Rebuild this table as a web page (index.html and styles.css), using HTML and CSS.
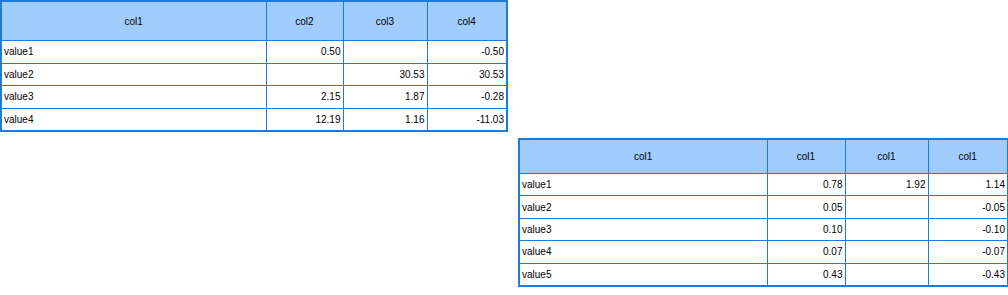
FILE: index.html
```html
<!DOCTYPE html>
<html>
<head>
<meta charset="utf-8">
<link rel="stylesheet" href="styles.css">
</head>
<body>
<div class="page">
  <table class="grid grid-a">
    <colgroup><col class="c1a"><col class="c2a"><col class="c3a"><col class="c4a"></colgroup>
    <thead>
      <tr><th>col1</th><th>col2</th><th>col3</th><th>col4</th></tr>
    </thead>
    <tbody>
      <tr><td class="lbl">value1</td><td>0.50</td><td></td><td>-0.50</td></tr>
      <tr><td class="lbl">value2</td><td></td><td>30.53</td><td>30.53</td></tr>
      <tr><td class="lbl">value3</td><td>2.15</td><td>1.87</td><td>-0.28</td></tr>
      <tr><td class="lbl">value4</td><td>12.19</td><td>1.16</td><td>-11.03</td></tr>
    </tbody>
  </table>
  <div class="second">
    <table class="grid grid-b">
      <colgroup><col class="c1b"><col class="c2b"><col class="c3b"><col class="c4b"></colgroup>
      <thead>
        <tr><th>col1</th><th>col1</th><th>col1</th><th>col1</th></tr>
      </thead>
      <tbody>
        <tr><td class="lbl">value1</td><td>0.78</td><td>1.92</td><td>1.14</td></tr>
        <tr><td class="lbl">value2</td><td>0.05</td><td></td><td>-0.05</td></tr>
        <tr><td class="lbl">value3</td><td>0.10</td><td></td><td>-0.10</td></tr>
        <tr><td class="lbl">value4</td><td>0.07</td><td></td><td>-0.07</td></tr>
        <tr><td class="lbl">value5</td><td>0.43</td><td></td><td>-0.43</td></tr>
      </tbody>
    </table>
  </div>
</div>
</body>
</html>
```

FILE: styles.css
```css
html, body {
  margin: 0;
  padding: 0;
  background: #ffffff;
}

.page {
  display: flex;
  flex-direction: column;
  align-items: flex-start;
}

.grid {
  border-collapse: collapse;
  table-layout: fixed;
  font-family: "Liberation Sans", Arial, sans-serif;
  font-size: 10px;
  color: #000000;
  border: 2px solid #1f7ad8;
}

.grid th,
.grid td {
  border: 1px solid #1f7ad8;
  padding: 0 2px;
  white-space: nowrap;
  overflow: hidden;
}

.grid th {
  background: #a0cdfd;
  font-weight: normal;
  text-align: center;
  height: 38px;
}

.grid td {
  height: 21.5px;
  text-align: right;
}

.grid td.lbl {
  text-align: left;
}

.grid-a { width: 506px; }
.c1a { width: 265px; }
.c2a { width: 77px; }
.c3a { width: 84px; }
.c4a { width: 80px; }

.second {
  padding-left: 518px;
  padding-top: 6px;
}

.grid-b { width: 489px; }
.grid-b th { height: 33px; }
.grid-b td { height: 21.4px; }
.c1b { width: 248px; }
.c2b { width: 78px; }
.c3b { width: 83px; }
.c4b { width: 80px; }
```
